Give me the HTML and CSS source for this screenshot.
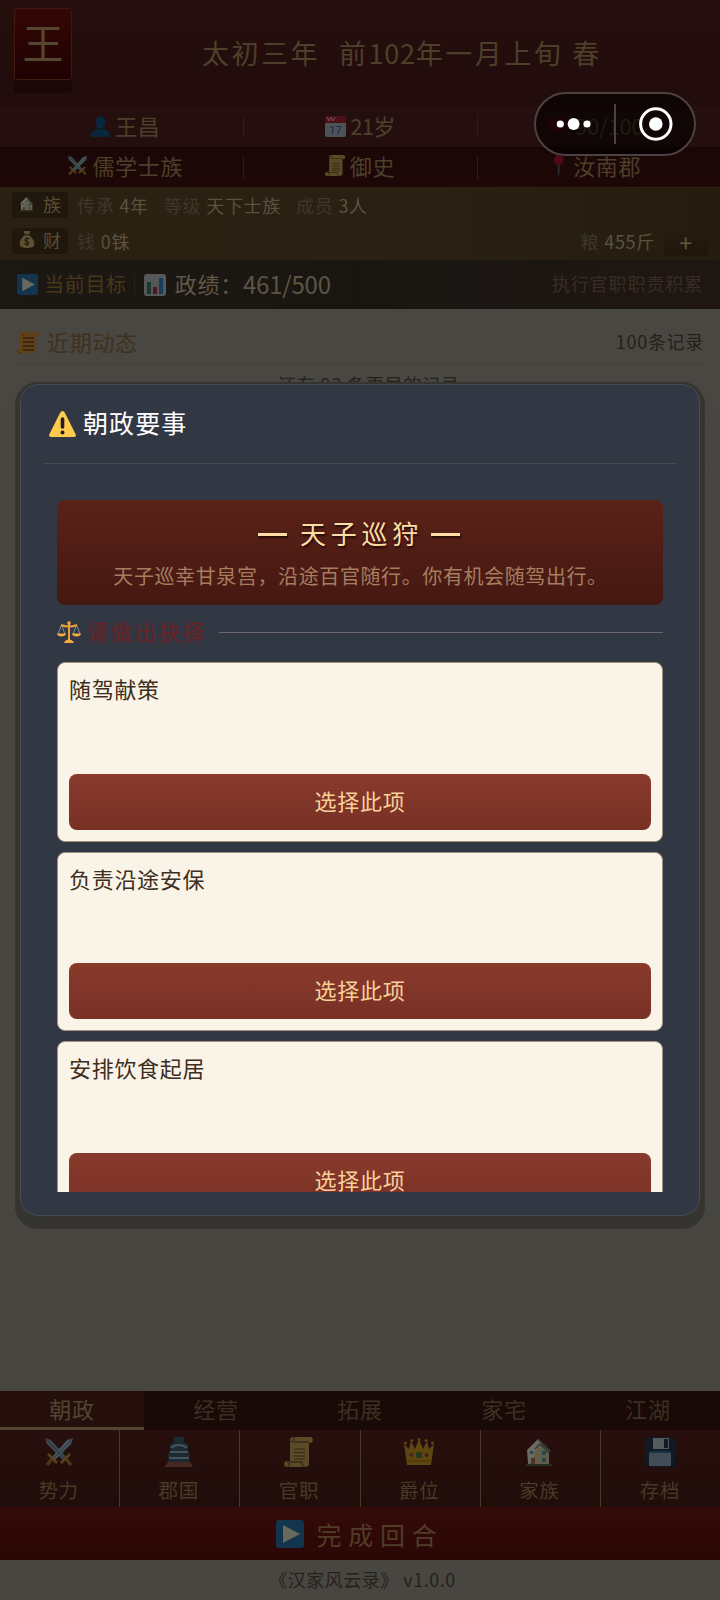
FILE: index.html
```html
<!DOCTYPE html>
<html lang="zh-CN">
<head>
<meta charset="utf-8">
<title>汉家风云录</title>
<link rel="stylesheet" href="styles.css">
</head>
<body>
<svg class="defs" aria-hidden="true">
  <symbol id="swords" viewBox="0 0 30 30">
    <path d="M1 1l6 2 16 18-3 3L3 7z" fill="#3c4a50"/><path d="M29 1l-6 2L7 21l3 3L27 7z" fill="#46545b"/>
    <path d="M2 2l19 20M28 2L9 22" stroke="#29343a" stroke-width="1"/>
    <path d="M4 17l9 9M26 17l-9 9" stroke="#59411a" stroke-width="2.6"/>
    <path d="M8 22l-5 6M22 22l5 6" stroke="#513515" stroke-width="3.4"/>
  </symbol>
  <symbol id="scroll" viewBox="0 0 30 30">
    <path d="M8 0h18c4 0 4 6 0 6h-1v20c0 2-1 4-4 4H3c-4 0-4-6 0-6h3V5C6 3 6 0 8 0z" fill="#5a4a27"/>
    <path d="M6 4c4 3 6-4 2-4M25 5H10M21 30c-3 0-3-3-3-5H3c3 0 3 5 0 5" fill="none" stroke="#382c17" stroke-width="1.3"/>
    <path d="M10 12h11M10 15.500h11M10 19h11M10 22h11" stroke="#33270f" stroke-width="1.2"/>
  </symbol>
  <symbol id="house" viewBox="0 0 30 30">
    <path d="M4 14L14 4l11 10v13H4z" fill="#625e49"/><path d="M3 13L14 2l4 5-8 9v10H4z" fill="#6a6962"/>
    <path d="M14 2l12 12-2 1-8-8-5 5" fill="none" stroke="#383a38" stroke-width="1.6"/>
    <path d="M6 14h3v3H6zM18 14h4v4h-4zM18 21h4v4h-4z" fill="#29464e"/><path d="M7 21h4v6H7z" fill="#563128"/>
    <path d="M2 27h26v2H2z" fill="#24301c"/>
  </symbol>
  <symbol id="play" viewBox="0 0 28 28">
    <rect width="28" height="28" rx="3" fill="#12344d"/><path d="M7 5l17 9-17 9z" fill="#68685f"/>
  </symbol>
</svg>

<div class="screen">
  <header class="top">
    <div class="titlebar">
      <div class="seal">王</div>
      <h1 class="date">太初三年<span class="gap"></span>前<span class="digits">102</span>年一月上旬<span class="gap small"></span>春</h1>
    </div>
    <div class="stats">
      <div class="stat"><svg class="i21" viewBox="0 0 21 21"><ellipse cx="10.500" cy="6.500" rx="5" ry="6.500" fill="#08273c"/><path d="M1 21c0-7 5-7 6-8h7c1 1 6 1 6 8z" fill="#08273c"/></svg><span>王昌</span></div>
      <div class="stat"><svg class="i21" viewBox="0 0 21 21"><rect y="2" width="21" height="19" rx="2" fill="#4b5359"/><path d="M0 0h21v7H0z" fill="#4c1016"/><path d="M2 1l2 4 2-4 2 4 2-4" fill="none" stroke="#6b5550"/><text x="10.500" y="18" class="calnum">17</text></svg><span class="age">21岁</span></div>
      <div class="stat"><svg class="i21" viewBox="0 0 21 21"><path d="M10.500 19L2 11C-3 4 7-2 10.500 4 14-2 24 4 19 11z" fill="#4a0914"/></svg><span class="health">90/100</span></div>
    </div>
    <div class="stats dark">
      <div class="stat"><svg class="i21"><use href="#swords"/></svg><span>儒学士族</span></div>
      <div class="stat"><svg class="i21"><use href="#scroll"/></svg><span>御史</span></div>
      <div class="stat"><svg class="i21" viewBox="0 0 21 21"><path d="M9.500 9h2.400l-.5 10-.8 2-.8-2z" fill="#252a2e"/><circle cx="10.700" cy="5" r="5" fill="#4d0b17"/></svg><span>汝南郡</span></div>
    </div>
  </header>

  <section class="clan">
    <div class="clanrow"><span class="tag"><svg class="i17"><use href="#house"/></svg>族</span><span class="k">传承</span><span class="v">4年</span><span class="k next">等级</span><span class="v">天下士族</span><span class="k next">成员</span><span class="v">3人</span></div>
    <div class="clanrow"><span class="tag"><svg class="i17" viewBox="0 0 18 20"><path d="M5 0h8l-2 4C16 8 18 12 17 16c-1 4-15 4-16 0C0 12 2 8 7 4z" fill="#5d5132"/><path d="M5 4h8" stroke="#2c2415" stroke-width="1.5"/><path d="M12 9c-5-3-7 2-3 3s1 5-3 2M9 7v10" fill="none" stroke="#241d11" stroke-width="1.3"/></svg>财</span><span class="k">钱</span><span class="v">0铢</span><span class="k push">粮</span><span class="v">455斤</span><button class="plus">+</button></div>
  </section>

  <section class="goal">
    <svg class="i21"><use href="#play"/></svg><span class="goalname">当前目标</span><i class="goalline"></i>
    <svg class="i22" viewBox="0 0 22 22"><rect width="22" height="22" rx="3" fill="#55585a"/><path d="M3 8h4v12H3z" fill="#1b3a24"/><path d="M9 13h4v7H9z" fill="#521724"/><path d="M15 4h4v16h-4z" fill="#163e58"/></svg>
    <span class="merit">政绩：</span><span class="score">461/500</span><span class="hint">执行官职职责积累</span>
  </section>

  <main class="log">
    <div class="loghead">
      <svg class="i24" viewBox="0 0 24 24"><path d="M4 1h19v5h-3v16H2v-5h2z" fill="#604018"/><path d="M7 7h11M7 11h11M7 15h11M7 19h11" stroke="#35210e" stroke-width="1.400"/><path d="M5 2l3 3M1 20l4 3" stroke="#3f2811"/></svg>
      <span class="logtitle">近期动态</span><span class="logcount">100条记录</span>
    </div>
    <p class="more">还有 92 条更早的记录</p>
    <i class="logmark"></i>
  </main>

  <nav class="tabs"><span class="tab on">朝政</span><span class="tab">经营</span><span class="tab">拓展</span><span class="tab">家宅</span><span class="tab">江湖</span></nav>
  <nav class="menu">
    <div class="item"><svg class="i30"><use href="#swords"/></svg>势力</div>
    <div class="item"><svg class="i30" viewBox="0 0 30 30"><path d="M10 0h10v5l5 3-2 4 3 5-1 6 4 7H1l4-7-1-6 3-5-2-4 5-3z" fill="#1c2b33"/><path d="M7 11c4-4 12-4 16 0M6 15h18M5 21h20" fill="none" stroke="#45545a" stroke-width="1.800"/><path d="M4 25h22l3 5H1z" fill="#472820"/></svg>郡国</div>
    <div class="item"><svg class="i30"><use href="#scroll"/></svg>官职</div>
    <div class="item"><svg class="i30" viewBox="0 0 30 30"><path d="M3 28L0 7l5 5 2-8 4 8 4-10 4 10 4-8 2 8 5-5-3 21z" fill="#5e4610"/><g fill="#5e4610"><circle cx="1.500" cy="6" r="1.500"/><circle cx="8" cy="3.500" r="1.500"/><circle cx="15" cy="2.500" r="1.500"/><circle cx="22" cy="3.500" r="1.500"/><circle cx="28.500" cy="6" r="1.500"/></g><rect x="12" y="15" width="6" height="6" rx="1" fill="#263b1a"/><circle cx="7.500" cy="18" r="2" fill="#44202c"/><circle cx="22.500" cy="18" r="2" fill="#44202c"/><path d="M4 24h22" stroke="#493109"/></svg>爵位</div>
    <div class="item"><svg class="i30"><use href="#house"/></svg>家族</div>
    <div class="item"><svg class="i30" viewBox="0 0 30 30"><path d="M3 0h24l3 3v27H3l-3-3V3z" fill="#101a23"/><path d="M8 1h16v11H8z" fill="#565a5d"/><path d="M19 2h4v9h-4z" fill="#141b22"/><path d="M4 14h22v15H4z" fill="#424b56"/><path d="M4 14h22v2H4z" fill="#173446"/></svg>存档</div>
  </nav>
  <button class="turn"><svg class="i28"><use href="#play"/></svg><span>完成回合</span></button>
  <footer class="foot">《汉家风云录》 v1.0.0</footer>
</div>

<div class="modal">
  <div class="modalhead">
    <svg class="i27" viewBox="0 0 27 27"><path d="M13.500 0Q15 0 16 2l11 22q0 2-2 2H2q-2 0-2-2L11 2q1-2 2.500-2z" fill="#ffcb4c"/><path d="M13.500 8v8" stroke="#231f20" stroke-width="3.600" stroke-linecap="round"/><circle cx="13.500" cy="21.500" r="2" fill="#231f20"/></svg>
    <h2>朝政要事</h2>
  </div>
  <div class="scroller">
    <div class="banner">
      <h3><i class="dash"></i><span>天子巡狩</span><i class="dash"></i></h3>
      <p>天子巡幸甘泉宫，沿途百官随行。你有机会随驾出行。</p>
    </div>
    <div class="choose">
      <svg class="i24" viewBox="0 0 24 22"><g fill="none" stroke="#8997a3" stroke-width=".9"><path d="M4.500 4L1 13M4.500 4L8 13M19.500 4L16 13M19.500 4L23 13"/></g><path d="M12 1v18M4 4c4 2 12 2 16 0" fill="none" stroke="#e8a03a" stroke-width="2"/><path d="M0 12.500h9c0 4-9 4-9 0zM15 12.500h9c0 4-9 4-9 0zM7 22c1-3 3-3 5-4 2 1 4 1 5 4z" fill="#f3ac3f"/><circle cx="12" cy="2" r="1.800" fill="#f3ac3f"/></svg>
      <span>请做出抉择</span><i class="rule"></i>
    </div>
    <article class="card"><p>随驾献策</p><button class="pick">选择此项</button></article>
    <article class="card"><p>负责沿途安保</p><button class="pick">选择此项</button></article>
    <article class="card"><p>安排饮食起居</p><button class="pick">选择此项</button></article>
  </div>
</div>

<div class="capsule">
  <svg viewBox="0 0 162 64"><rect x="1" y="1" width="160" height="62" rx="31" fill="#000" fill-opacity=".58" stroke="#4c4241" stroke-width="2"/><g fill="#fff"><circle cx="26.300" cy="32" r="3.600"/><circle cx="39.600" cy="32" r="6"/><circle cx="53" cy="32" r="3.600"/><circle cx="121.800" cy="32" r="6.800"/></g><path d="M81 12v40" stroke="#4c4241" stroke-width="2"/><circle cx="121.800" cy="32" r="15.200" fill="none" stroke="#fff" stroke-width="3"/></svg>
</div>
</body>
</html>
```

FILE: styles.css
```css
* { box-sizing: border-box; }
body {
  margin: 0;
  width: 720px;
  height: 1600px;
  overflow: hidden;
  position: relative;
  background: #484640;
  font-family: "Noto Sans CJK SC", sans-serif;
  letter-spacing: .7px;
}
h1, h2, h3, p { margin: 0; font-weight: 400; }
svg { display: block; flex: none; }
button { border: 0; padding: 0; font: inherit; letter-spacing: inherit; }
i { display: block; flex: none; }
.defs { position: absolute; width: 0; height: 0; }
.i17 { width: 16px; height: 18px; }
.i21 { width: 21px; height: 21px; }
.i22 { width: 22px; height: 22px; }
.i24 { width: 24px; height: 24px; }
.i27 { width: 27px; height: 27px; }
.i28 { width: 28px; height: 28px; }
.i30 { width: 30px; height: 30px; }

.screen { display: flex; flex-direction: column; height: 1600px; }

/* header */
.top { height: 187px; background: linear-gradient(#240f0d, #230d0c 40%, #200a09); }
.titlebar { height: 106px; display: flex; padding: 8px 0 0 14px; }
.seal {
  width: 58px; height: 72px;
  border: 1px solid #42190f;
  border-radius: 3px;
  background: linear-gradient(#350706, #1e0202);
  box-shadow: 0 13px 0 #1a0706;
  color: #554630;
  font-size: 41px; line-height: 65px;
  letter-spacing: 0;
  text-align: center;
}
.date {
  margin-left: 130px; padding-top: 25px;
  display: flex;
  height: 66px; line-height: 40px;
  font-size: 27px; letter-spacing: 2.5px;
  color: #4d3f2a;
  white-space: nowrap;
}
.digits { letter-spacing: .8px; }
.gap { width: 19px; }
.gap.small { width: 9px; }
.stats {
  height: 41px; padding: 0 8px;
  display: flex;
  background: #240f0e;
  color: #4d3f2a;
  font-size: 22px;
}
.stats span { margin-top: -2px; }
.stats.dark { height: 40px; background: linear-gradient(#190706, #1e0807); }
.stat {
  flex: 1; display: flex; align-items: center; justify-content: center; gap: 4px;
  position: relative; line-height: 34px; padding-bottom: 1px;
}
.dark .stat { padding-bottom: 3px; }
.stat + .stat::before {
  content: ""; position: absolute; left: 0; top: 9px;
  width: 1px; height: 23px; background: #321a15;
}
.age { letter-spacing: -.6px; }
.health { margin-left: 4px; letter-spacing: -.2px; }
.calnum { font: 11px Roboto, sans-serif; text-anchor: middle; fill: #172a3a; letter-spacing: 0; }

/* clan and wealth */
.clan { height: 73px; background: linear-gradient(90deg, #2b2113, #292113 60%, #251c10); border-top: 1px solid #33200f; }
.clanrow { height: 36px; display: flex; align-items: center; font-size: 18px; line-height: 24px; letter-spacing: .7px; padding: 0 12px 2px; }
.tag {
  width: 56px; height: 26px; margin-right: 9px;
  display: flex; align-items: center; gap: 8px; padding: 0 0 2px 7px;
  border-radius: 4px; background: #20170d; color: #594d37;
}
.k { color: #40362a; margin-right: 5px; }
.k.next { margin-left: 15px; }
.v { color: #5c523f; }
.k.push { margin-left: auto; }
.plus {
  width: 44px; height: 27px; margin: 2px 0 0 9px;
  border-radius: 4px; background: linear-gradient(#261c10, #20150b);
  color: #62563f; font-size: 24px; line-height: 22px;
}

/* current goal */
.goal {
  height: 49px; display: flex; align-items: center; padding: 0 17px;
  background: linear-gradient(90deg, #1c1713, #191612 50%, #1f1613);
}
.goal span { margin-top: -3px; }
.goalname { margin-left: 6px; font-size: 20px; color: #483819; }
.goalline { width: 1px; height: 20px; background: #29221a; margin: 0 9px 0 7px; }
.merit { margin-left: 9px; font-size: 22px; color: #615847; }
.score { font-size: 24px; letter-spacing: -.2px; color: #5d5444; }
.hint { margin-left: auto; font-size: 18px; letter-spacing: .9px; color: #3a2c23; }

/* recent events */
.log { flex: 1; position: relative; padding: 0 16px; background: linear-gradient(#494741, #474540); overflow: hidden; }
.loghead { height: 56px; display: flex; align-items: center; padding-top: 12px; border-bottom: 1px solid #45413a; }
.loghead span { margin-top: -3px; }
.logtitle { margin-left: 7px; font-size: 22px; color: #3e311e; }
.logcount { margin-left: auto; font-size: 18px; color: #252019; }
.more { text-align: center; font-size: 18px; letter-spacing: .8px; line-height: 26px; margin-top: 6px; color: #24211b; padding-left: 18px; }
.logmark { position: absolute; left: 17px; top: 102px; width: 3px; height: 56px; background: #29220e; }

/* bottom navigation */
.tabs { height: 39px; display: flex; background: #190a08; }
.tab { flex: 1; text-align: center; font-size: 22px; line-height: 34px; color: #3d2f22; }
.tab.on { background: #250f0d; color: #54442f; border-bottom: 3px solid #54452f; }
.menu { height: 77px; display: flex; background: linear-gradient(#270f0d, #200d0a); }
.item {
  width: 120.200px; flex: none;
  display: flex; flex-direction: column; align-items: center;
  padding: 7px 2px 0 0; gap: 8px;
  border-right: 1px solid #4a3a2a;
  font-size: 19.500px; line-height: 29px; color: #4a3927;
}
.item:last-child { border: 0; }
.turn {
  height: 53px; display: flex; align-items: center; justify-content: center; gap: 12px;
  background: linear-gradient(#340b08, #2a0705);
  color: #513c28; font-size: 25px; letter-spacing: 6.800px;
}
.foot { height: 40px; text-align: center; font-size: 18px; line-height: 38px; letter-spacing: .5px; color: #25221c; padding-left: 5px; }

/* dialog */
.modal {
  position: absolute; left: 20px; top: 384px;
  width: 680px; height: 832px;
  padding: 0 22px;
  display: flex; flex-direction: column;
  border: 1px solid #4a4b50;
  border-radius: 18px;
  background: #323744;
  box-shadow: 0 3px 0 5px #353430, 0 8px 0 5px #353430;
}
.modalhead { height: 79px; display: flex; align-items: center; gap: 7px; padding-left: 6px; border-bottom: 1px solid #4a4955; flex: none; }
.modalhead h2 { font-size: 25px; letter-spacing: 1.100px; margin-top: -4px; color: #fff; }
.scroller { margin: 36px 14px 0; height: 692px; overflow: hidden; flex: none; }
.banner {
  height: 105px; border-radius: 8px; padding-top: 14px;
  background: linear-gradient(#5b2218, #4c1b14 65%, #441812);
  text-align: center;
}
.banner h3 {
  display: flex; justify-content: center; align-items: center; gap: 13px;
  height: 40px; font-size: 26px; letter-spacing: 4.800px;
  padding-right: 2px;
  color: #fbdda5; text-shadow: 1px 2px 2px #270b08;
}
.banner h3 span { margin: -3px -5px 0 0; }
.dash { width: 29px; height: 3px; background: #fbdda5; box-shadow: 1px 2px 2px #270b08; }
.banner p { font-size: 20px; letter-spacing: .6px; line-height: 44px; padding-left: 1px; color: #a77d5f; }
.choose { height: 57px; display: flex; align-items: center; gap: 6px; padding-bottom: 3px; }
.choose span { font-size: 21.500px; letter-spacing: 2.500px; margin-top: -3px; color: #65262a; text-shadow: 0 1px 2px #4b2a30; }
.rule { flex: 1; height: 1px; margin-left: 6px; background: #6d6570; }
.card {
  height: 179.600px; margin-bottom: 10px; padding: 8px 11px 11px;
  display: flex; flex-direction: column; justify-content: space-between;
  border: 1px solid #a1917b; border-radius: 8px; background: #faf3e7;
}
.card p { font-size: 22px; line-height: 34px; color: #3c2e20; }
.pick {
  height: 56px; border-radius: 8px;
  background: linear-gradient(#893a2c, #783025);
  color: #f8d09a; font-size: 22px; line-height: 32px; padding-bottom: 4px;
}

.capsule { position: absolute; left: 534px; top: 92px; width: 162px; height: 64px; }
```
